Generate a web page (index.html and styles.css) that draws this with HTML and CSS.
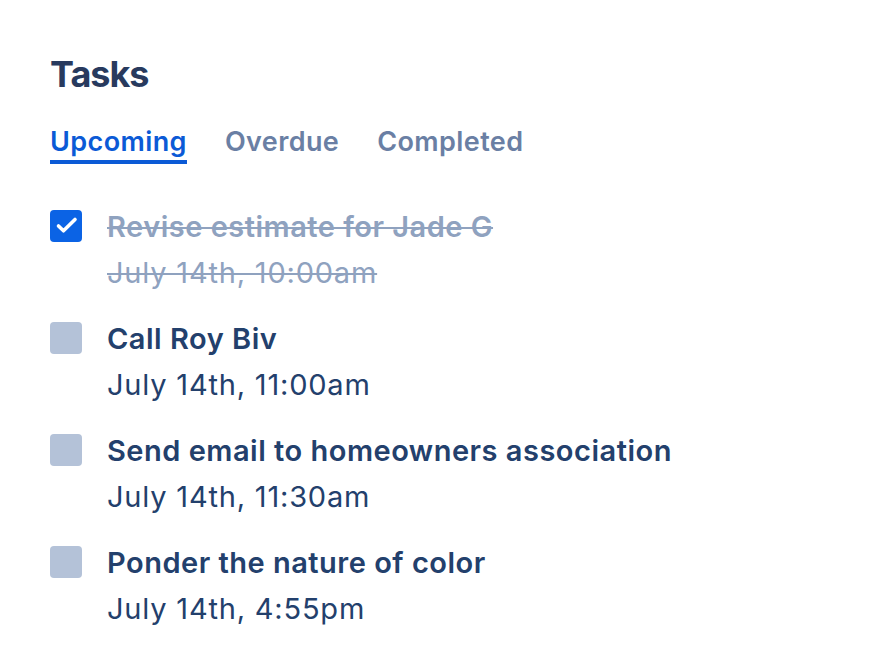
FILE: index.html
```html
<!DOCTYPE html>
<html>
<head>
<meta charset="utf-8">
<link rel="stylesheet" href="styles.css">
</head>
<body>
<main class="panel">
  <h1 class="title">Tasks</h1>
  <nav class="tabs">
    <span class="tab active">Upcoming</span>
    <span class="tab">Overdue</span>
    <span class="tab">Completed</span>
  </nav>
  <ul class="tasks">
    <li class="task done">
      <span class="box checked"><svg viewBox="0 0 32 32" width="32" height="32"><path d="M8.5 16l5 4.8L25 9.5" fill="none" stroke="#fff" stroke-width="3.6" stroke-linecap="round" stroke-linejoin="round"/></svg></span>
      <div class="body">
        <div class="name">Revise estimate for Jade G</div>
        <div class="when">July 14th, 10:00am</div>
      </div>
    </li>
    <li class="task">
      <span class="box"></span>
      <div class="body">
        <div class="name">Call Roy Biv</div>
        <div class="when">July 14th, 11:00am</div>
      </div>
    </li>
    <li class="task">
      <span class="box"></span>
      <div class="body">
        <div class="name">Send email to homeowners association</div>
        <div class="when">July 14th, 11:30am</div>
      </div>
    </li>
    <li class="task">
      <span class="box"></span>
      <div class="body">
        <div class="name">Ponder the nature of color</div>
        <div class="when">July 14th, 4:55pm</div>
      </div>
    </li>
  </ul>
</main>
</body>
</html>
```
FILE: styles.css
```css
html, body {
  margin: 0;
  padding: 0;
  background: #ffffff;
}
body {
  font-family: Inter, "Noto Sans", sans-serif;
}
.panel {
  padding: 54px 0 0 50px;
}
.title {
  margin: 0;
  font-size: 36px;
  line-height: 40px;
  font-weight: 700;
  color: #283a5e;
  letter-spacing: -1px;
}
.tabs {
  display: flex;
  gap: 38px;
  margin-top: 32px;
}
.tab {
  font-size: 27px;
  line-height: 32px;
  font-weight: 600;
  color: #6a7fa4;
  letter-spacing: 0.4px;
  padding-bottom: 2px;
  border-bottom: 4px solid transparent;
}
.tab.active {
  color: #0b5ad6;
  border-bottom-color: #0b5ad6;
}
.tasks {
  list-style: none;
  margin: 40px 0 0;
  padding: 0;
  display: flex;
  flex-direction: column;
  gap: 20px;
}
.task {
  display: flex;
  gap: 25px;
}
.box {
  flex: none;
  width: 32px;
  height: 32px;
  border-radius: 4px;
  background: #b4c2d8;
  margin-top: 6px;
  display: flex;
}
.box.checked {
  background: #0b63e5;
}
.name, .when {
  font-size: 29px;
  line-height: 46px;
  color: #23406c;
}
.name {
  font-weight: 600;
  letter-spacing: 0.5px;
}
.when {
  font-weight: 400;
  letter-spacing: 0.8px;
}
.task.done .name, .task.done .when {
  color: #8fa2bf;
  text-decoration: line-through;
  text-decoration-thickness: 2px;
}
```
